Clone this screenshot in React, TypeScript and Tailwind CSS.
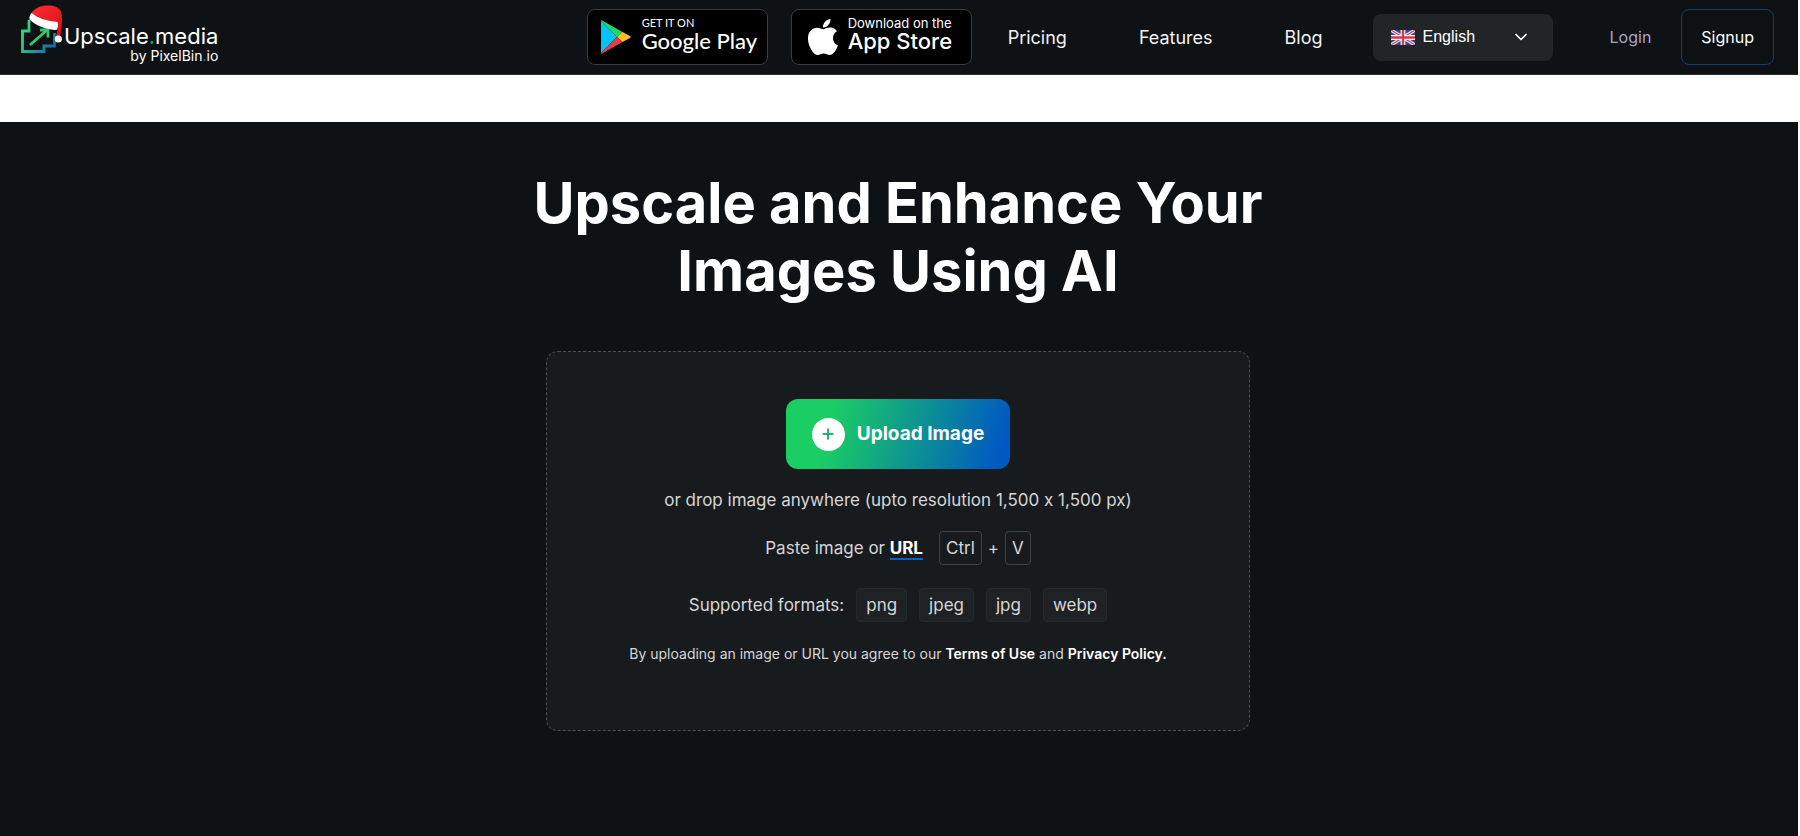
import React from "react";
import { ChevronDown, Plus } from "lucide-react";

const formats = ["png", "jpeg", "jpg", "webp"];

const links = [
  { label: "Pricing", href: "#pricing" },
  { label: "Features", href: "#features" },
  { label: "Blog", href: "#blog" },
];

const LogoMark: React.FC = () => (
  <svg className="h-12 w-11 shrink-0" viewBox="20 5 44 48" fill="none" aria-hidden="true">
    <defs>
      <linearGradient id="mark" x1="24" y1="32" x2="54" y2="48" gradientUnits="userSpaceOnUse">
        <stop offset="0" stopColor="#3fd07c" />
        <stop offset="0.45" stopColor="#2a9d95" />
        <stop offset="1" stopColor="#1565b5" />
      </linearGradient>
      <linearGradient id="hat" x1="34" y1="8" x2="62" y2="34" gradientUnits="userSpaceOnUse">
        <stop offset="0" stopColor="#ff2a2a" />
        <stop offset="1" stopColor="#d4121c" />
      </linearGradient>
    </defs>
    <path d="M29 20V31H22.500V51.500H44V46H54.500V33" stroke="url(#mark)" strokeWidth="2.8" />
    <path d="M30 45L47 30M40 30H48V37.500" stroke="#35c56c" strokeWidth="2.8" />
    <path
      d="M31 14C34 8 41 5.500 48 5.500C56 5.500 61 8 61.800 15C62.500 23 61.500 30 60 37L56 36C57.500 32 57.500 28 57 24Z"
      fill="url(#hat)"
    />
    <path d="M31.500 13C38 18 47 21 57.500 22C58.500 24.500 58 28 56.500 30C46 29.500 36 26 29.500 19.500C29 17 30 14.500 31.500 13Z" fill="#fff" />
    <circle cx="58.300" cy="39" r="3.600" fill="#fff" />
  </svg>
);

const PlayIcon: React.FC = () => (
  <svg className="h-[34px] w-8 shrink-0" viewBox="0 0 32 34" aria-hidden="true">
    <path d="M1 1V33L17 17Z" fill="#00c3f7" />
    <path d="M1 1C1 0 2 0 3 1L22.500 12L17 17Z" fill="#1fd865" />
    <path d="M22.500 12L30 16Q31.500 17 30 18L22.500 22L17 17Z" fill="#fbbc24" />
    <path d="M1 33C1 34 2 34 3 33L22.500 22L17 17Z" fill="#e33b4e" />
  </svg>
);

const AppleIcon: React.FC = () => (
  <svg className="ml-1 h-9 w-[30px] shrink-0" viewBox="28 0 328 448" preserveAspectRatio="none" fill="#fff" aria-hidden="true">
    <path
      d="M318.700 236.700c-.2-36.700 16.400-64.400 50-84.800-18.800-26.900-47.200-41.700-84.700-44.600-35.500-2.800-74.300 20.700-88.500 20.700-15 0-49.400-19.700-76.400-19.700C63.300 109.200 4 152.800 4 241.500q0 39.300 14.400 81.200c12.800 36.700 59 126.700 107.200 125.200 25.200-.6 43-17.900 75.800-17.900 31.800 0 48.300 17.900 76.400 17.900 48.600-.7 90.400-82.500 102.600-119.300-65.200-30.700-61.700-90-61.700-91.900zm-56.600-164.200c27.300-32.400 24.800-61.900 24-72.500-24.100 1.400-52 16.400-67.900 34.900-17.500 19.800-27.800 44.300-25.600 71.900 26.100 2 49.900-11.400 69.500-34.300z"
      transform="translate(24 0) scale(.87 1)"
    />
  </svg>
);

const Flag: React.FC = () => (
  <svg className="h-[15px] w-6 shrink-0" viewBox="0 0 60 36" preserveAspectRatio="none" aria-hidden="true">
    <path d="M0 0H60V36H0Z" fill="#31488f" />
    <path d="M0 0L60 36M60 0L0 36" stroke="#e9ecf5" strokeWidth="8" />
    <path d="M0 0L60 36M60 0L0 36" stroke="#d4455a" strokeWidth="3" />
    <path d="M30 0V36M0 18H60" stroke="#f3f4f9" strokeWidth="12" />
    <path d="M30 0V36M0 18H60" stroke="#d8394b" strokeWidth="6" />
  </svg>
);

interface StoreBadgeProps {
  href: string;
  icon: React.ReactNode;
  children: React.ReactNode;
}

const StoreBadge: React.FC<StoreBadgeProps> = ({ href, icon, children }) => (
  <a
    href={href}
    className="flex h-14 w-[181px] items-center gap-2.5 rounded-lg border border-[#3a3c3e] bg-black pl-3 text-white"
  >
    {icon}
    <span className="flex flex-col pb-1">{children}</span>
  </a>
);

const Header: React.FC = () => (
  <header className="flex h-[75px] items-center justify-between border-b border-[#2a2c2e] bg-[#0f1214] pr-6 pl-5">
    <a href="#home" className="flex self-start pt-[5px]">
      <LogoMark />
      <span className="flex flex-col items-end pt-[19px] text-white">
        <span className="text-[22px] leading-6">
          Upscale<span className="text-[#1f9d74]">.</span>media
        </span>
        <span className="text-sm leading-4">
          by PixelBin<span className="text-[#5b7f9a]">.</span>io
        </span>
      </span>
    </a>
    <nav className="flex items-center text-[18px] text-[#f2f2f2]">
      <div className="mr-9 flex gap-[23px]">
        <StoreBadge href="#google-play" icon={<PlayIcon />}>
          <span className="font-[Lato,sans-serif] text-[11px] leading-3">GET IT ON</span>
          <span className="font-[Lato,sans-serif] text-[22px] leading-6 font-medium">Google Play</span>
        </StoreBadge>
        <StoreBadge href="#app-store" icon={<AppleIcon />}>
          <span className="text-[13px] leading-3">Download on the</span>
          <span className="text-[22px] leading-6 font-medium">App Store</span>
        </StoreBadge>
      </div>
      <div className="mr-[50px] flex gap-[72px]">
        {links.map((link) => (
          <a key={link.label} href={link.href}>
            {link.label}
          </a>
        ))}
      </div>
      <label className="mr-[57px] flex h-[47px] w-[180px] items-center rounded-lg bg-[#222528] pr-[22px] pl-[18px] text-white">
        <Flag />
        <select
          aria-label="Language"
          className="ml-2 flex-1 appearance-none bg-transparent font-['Liberation_Sans',sans-serif] text-base outline-none"
          defaultValue="English"
        >
          <option>English</option>
        </select>
        <ChevronDown className="pointer-events-none size-5" />
      </label>
      <a href="#login" className="mr-[30px] text-base text-[#a9a6c8]">
        Login
      </a>
      <button type="button" className="h-14 rounded-lg border border-[#173c66] px-[19px] text-base text-white">
        Signup
      </button>
    </nav>
  </header>
);

const Uploader: React.FC = () => (
  <section className="mx-auto mt-[46px] flex w-full max-w-[704px] flex-col items-center rounded-xl border border-dashed border-[#4a4d50] bg-[#181b1e] pt-[47px] pb-[66px] text-[17px] leading-6 text-[#d5d6d7]">
    <button
      type="button"
      className="flex h-[70px] w-56 items-center justify-center gap-3 rounded-xl bg-linear-105/srgb from-[#1bce63] from-20% to-[#0058c2] to-95% text-[19px] font-bold text-white"
    >
      <span className="flex size-[33px] items-center justify-center rounded-full bg-white">
        <Plus className="size-4 text-[#22b573]" strokeWidth={3} />
      </span>
      Upload Image
    </button>
    <p className="mt-[19px]">or drop image anywhere (upto resolution 1,500 x 1,500 px)</p>
    <div className="mt-[19px] flex items-center">
      <p>
        Paste image or{" "}
        <a href="#url" className="border-b-2 border-[#0b62c4] font-bold text-white">
          URL
        </a>
      </p>
      <kbd className="ml-4 rounded border border-[#3f4245] px-1.5 py-1 font-[Inter,sans-serif]">Ctrl</kbd>
      <span className="px-1.5">+</span>
      <kbd className="rounded border border-[#3f4245] px-1.5 py-1 font-[Inter,sans-serif]">V</kbd>
    </div>
    <div className="mt-[23px] flex items-center">
      <p>Supported formats:</p>
      <ul className="ml-3 flex gap-3">
        {formats.map((format) => (
          <li key={format} className="rounded border border-[#26292b] bg-[#1f2224] px-[9px] py-1">
            {format}
          </li>
        ))}
      </ul>
    </div>
    <p className="mt-[22px] text-sm leading-5">
      By uploading an image or URL you agree to our{" "}
      <a href="#terms" className="font-semibold text-white">
        Terms of Use
      </a>{" "}
      and{" "}
      <a href="#privacy" className="font-semibold text-white">
        Privacy Policy.
      </a>
    </p>
  </section>
);

export default function App() {
  return (
    <div className="flex min-h-screen flex-col gap-[47px] bg-white pr-0.5 font-[Inter,sans-serif] [font-feature-settings:'calt'_0]">
      <Header />
      <main className="flex-1 bg-[#0f1214] pt-[47px] pr-0.5">
        <h1 className="mx-auto max-w-[760px] text-center text-[56px] leading-[68px] font-bold text-white">
          Upscale and Enhance Your Images Using AI
        </h1>
        <Uploader />
      </main>
    </div>
  );
}
